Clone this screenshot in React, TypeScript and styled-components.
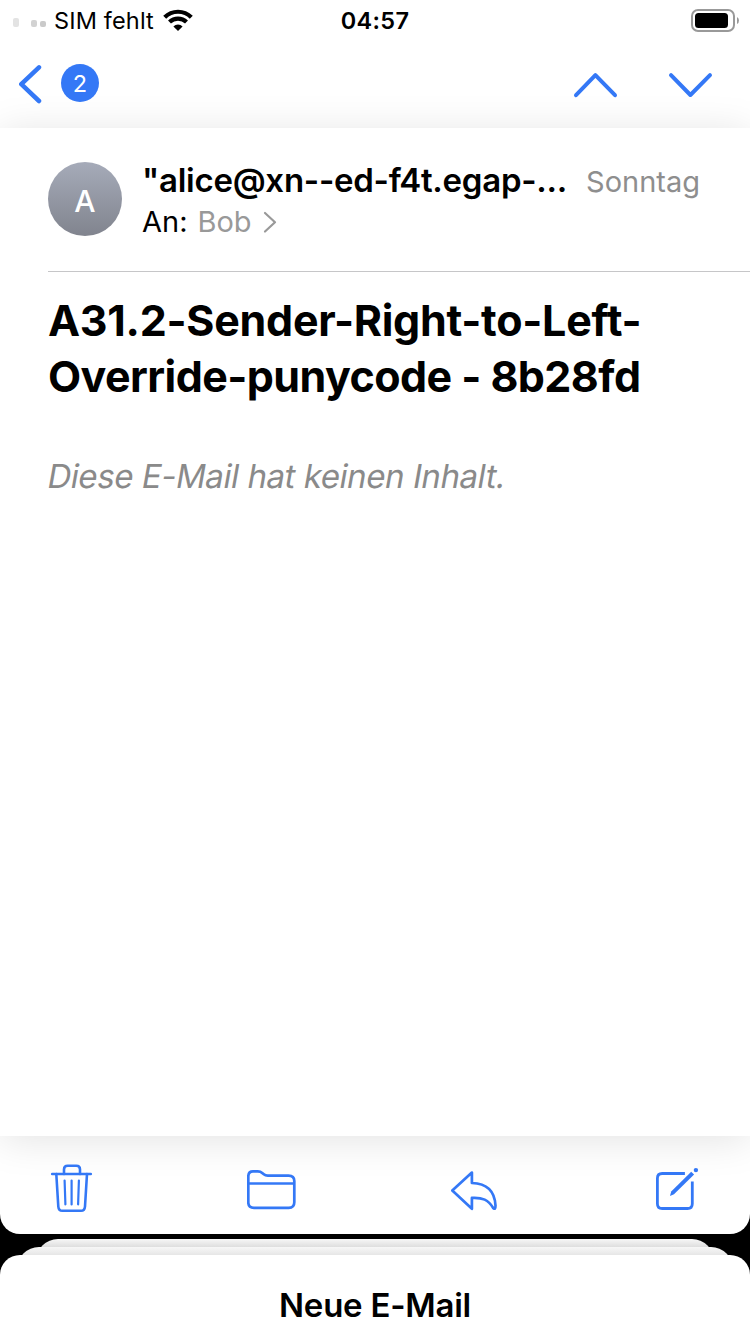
import React from 'react';
import styled, { createGlobalStyle } from 'styled-components';

const BLUE = '#3478f6';

const GlobalStyle = createGlobalStyle`
  * { box-sizing: border-box; }
  body { margin: 0; background: #000; font-family: Inter, "Liberation Sans", sans-serif; color: #000; }
  svg { display: block; flex: none; }
`;

const Screen = styled.div`
  width: 750px;
  height: 1334px;
  overflow: hidden;
  display: flex;
  flex-direction: column;
  background: #000;
`;

const MailCard = styled.main`
  height: 1234px;
  flex: none;
  display: flex;
  flex-direction: column;
  overflow: hidden;
  background: #fff;
  border-radius: 0 0 20px 20px;
`;

const StatusBar = styled.div`
  height: 40px;
  flex: none;
  display: grid;
  grid-template-columns: 1fr auto 1fr;
  align-items: center;
  padding: 0 11px 0 13px;
  z-index: 1;
`;

const Carrier = styled.div`
  display: flex;
  align-items: center;
  font-size: 23.5px;
  line-height: 40px;
  letter-spacing: 0.15px;
  white-space: nowrap;
`;

const CarrierName = styled.span`
  margin: 1px 9px 0 8px;
`;

const Clock = styled.time`
  font-size: 23.5px;
  font-weight: 600;
  line-height: 40px;
  letter-spacing: 0.3px;
  padding: 1px 2px 0 0;
`;

const BatterySlot = styled.div`
  display: flex;
  justify-content: flex-end;
`;

const NavBar = styled.nav`
  height: 88px;
  flex: none;
  display: flex;
  align-items: flex-start;
  padding: 24px 37px 0 17px;
  z-index: 1;
`;

const CountBadge = styled.span`
  width: 38px;
  height: 38px;
  margin-left: 18px;
  border-radius: 50%;
  background: ${BLUE};
  color: #fff;
  font-size: 23.5px;
  line-height: 39px;
  text-align: center;
`;

const NavArrows = styled.div`
  display: flex;
  gap: 49px;
  margin: 7px 0 0 auto;
`;

const Content = styled.section`
  height: 1008px;
  flex: none;
  background: #fff;
  box-shadow: 0 4px 38px rgba(0, 0, 0, 0.115);
  padding-left: 48px;
`;

const MessageHeader = styled.header`
  height: 144px;
  display: flex;
  padding: 34px 50px 0 0;
  border-bottom: 1px solid #c6c6c8;
`;

const Avatar = styled.div`
  width: 74px;
  height: 74px;
  flex: none;
  border-radius: 50%;
  background: linear-gradient(#a6abb9, #81848e);
  color: #fff;
  font-size: 30px;
  font-weight: 500;
  line-height: 78px;
  text-align: center;
`;

const HeaderLines = styled.div`
  flex: 1;
  margin-left: 20px;
`;

const SenderRow = styled.div`
  height: 40px;
  display: flex;
  justify-content: space-between;
  line-height: 36px;
  white-space: nowrap;
`;

const Sender = styled.span`
  font-size: 33px;
  font-weight: 600;
  letter-spacing: -0.26px;
`;

const DateLabel = styled.span`
  font-size: 29px;
  line-height: 40px;
  color: #8e8e8e;
`;

const RecipientRow = styled.div`
  display: flex;
  align-items: center;
  height: 40px;
  font-size: 29px;
  line-height: 40px;
`;

const Recipient = styled.span`
  margin: 0 11px 0 10px;
  color: #999;
`;

const Subject = styled.h1`
  margin: 0;
  padding-top: 20px;
  font-size: 43px;
  font-weight: 700;
  line-height: 56px;
  white-space: nowrap;
`;

const SubjectLine = styled.span<{ $tracking: number }>`
  display: block;
  letter-spacing: ${p => p.$tracking}px;
`;

const EmptyNote = styled.p`
  margin: 50px 0 0;
  font-size: 33px;
  line-height: 44px;
  letter-spacing: -0.43px;
  color: #8a8a8a;
  white-space: nowrap;
  transform: skewX(-10deg);
`;

const Toolbar = styled.footer`
  height: 98px;
  flex: none;
  display: flex;
  justify-content: space-between;
  padding: 26px 50px 0 50px;
`;

const SheetEdge = styled.div<{ $inset: number; $shade: string }>`
  height: 28px;
  flex: none;
  margin: 0 ${p => p.$inset}px -20px;
  border-radius: 22px 22px 0 0;
  background: linear-gradient(#f7f7f7, ${p => p.$shade} 8px);
`;

const SheetStack = styled.div`
  padding-top: 5px;
  display: flex;
  flex-direction: column;
`;

const ComposeSheet = styled.div`
  height: 90px;
  flex: none;
  border-radius: 20px 20px 0 0;
  background: #fff;
  padding-top: 28px;
  font-size: 33px;
  font-weight: 600;
  line-height: 44px;
  letter-spacing: -0.25px;
  text-align: center;
`;

const SignalDots = () => (
  <svg width="33" height="12" viewBox="0 0 33 12">
    <rect x="0" y="3" width="6" height="9" rx="2" fill="#e3e3e3" />
    <rect x="18" y="5" width="6" height="7" rx="2" fill="#d2d2d2" />
    <rect x="27" y="6" width="6" height="6" rx="2" fill="#cacaca" />
  </svg>
);

const WifiIcon = () => (
  <svg width="30" height="24" viewBox="0 0 30 24">
    <g fill="none" stroke="#000" strokeWidth="4.2">
      <path d="M1.7 8.2 A19 19 0 0 1 28.3 8.2" />
      <path d="M6.5 13.1 A12.2 12.2 0 0 1 23.5 13.1" />
    </g>
    <path d="M15 22 L10.4 17.4 A6.5 6.5 0 0 1 19.6 17.4 Z" />
  </svg>
);

const BatteryIcon = () => (
  <svg width="48" height="24" viewBox="0 0 48 24">
    <rect x="1" y="1" width="42" height="21" rx="6" fill="none" stroke="#999" strokeWidth="2" />
    <rect x="4" y="4" width="33" height="15" rx="3.5" />
    <path d="M46 8 Q48 9 48 11.5 Q48 14 46 15 Z" fill="#999" />
  </svg>
);

const BackIcon = () => (
  <svg width="26" height="40" viewBox="0 0 26 40">
    <path d="M22 3.3 L4.3 20.2 L22 37" fill="none" stroke={BLUE} strokeWidth="4.5" strokeLinecap="round" strokeLinejoin="round" />
  </svg>
);

const ArrowIcon = ({ down = false }: { down?: boolean }) => (
  <svg width="46" height="28" viewBox="0 0 46 28">
    <path
      d={down ? 'M4 4.2 L23.4 24 L43 4.2' : 'M4 24.2 L23.4 4.2 L43 24.2'}
      fill="none" stroke={BLUE} strokeWidth="4" strokeLinecap="round" strokeLinejoin="round"
    />
  </svg>
);

const DisclosureIcon = () => (
  <svg width="14" height="24" viewBox="0 0 14 24">
    <path d="M2 3 L12 12.2 L2 21.5" fill="none" stroke="#999" strokeWidth="2.2" strokeLinecap="round" strokeLinejoin="round" />
  </svg>
);

const TrashIcon = () => (
  <svg width="44" height="52" viewBox="50 1162 44 52" fill="none" stroke={BLUE} strokeWidth="2.6" strokeLinecap="round" strokeLinejoin="round">
    <path d="M52.2 1174 H90.8" />
    <path d="M64 1174 V1169.4 Q64 1165.7 67.7 1165.7 H76.3 Q80 1165.7 80 1169.4 V1174" />
    <path d="M56.3 1174 L58.3 1206.5 Q58.6 1210.8 62.3 1210.8 H81 Q84.7 1210.8 85 1206.5 L87 1174" />
    <path d="M64.6 1180.5 L65.4 1204.4 M71.6 1180.5 V1204.4 M78.9 1180.5 L78.1 1204.4" strokeWidth="2.2" />
  </svg>
);

const FolderIcon = () => (
  <svg width="52" height="52" viewBox="247 1162 52 52" fill="none" stroke={BLUE} strokeWidth="2.7" strokeLinejoin="round">
    <path d="M248.3 1202.5 V1176.5 Q248.3 1171.4 253 1171.4 H257.8 Q260.5 1171.4 262.2 1172.9 L263.8 1174.3 Q265.3 1175.6 267.8 1175.6 H288.5 Q294.3 1175.6 294.3 1181 V1202.3 Q294.3 1207.9 288.7 1207.9 H254 Q248.3 1207.9 248.3 1202.5 Z" />
    <path d="M248.3 1183.5 H294.3" />
  </svg>
);

const ReplyIcon = () => (
  <svg width="50" height="52" viewBox="451 1162 50 52" fill="none" stroke={BLUE} strokeWidth="2.7" strokeLinejoin="round">
    <path d="M471.9 1172.5 L452.3 1190.6 L471.9 1208.8 V1197.9 C482.5 1197.3 488.3 1199.8 493.2 1208 Q495.5 1210.2 495.5 1205.5 C494.7 1191 487.5 1183.4 471.9 1183 Z" />
  </svg>
);

const ComposeIcon = () => (
  <svg width="46" height="52" viewBox="654 1162 46 52" fill="none" stroke={BLUE} strokeWidth="2.8">
    <path d="M684.9 1173.5 H662.2 Q657.4 1173.5 657.4 1178.3 V1203.7 Q657.4 1208.5 662.2 1208.5 H687.5 Q692.3 1208.5 692.3 1203.7 V1181.5" />
    <path d="M670 1196 L671.2 1191.5 L691.2 1171.8 L694.1 1174.5 L674 1194.3 Z" fill={BLUE} stroke="none" />
    <circle cx="695.9" cy="1170.1" r="2.2" fill={BLUE} stroke="none" />
  </svg>
);

export default function App() {
  return (
    <Screen>
      <GlobalStyle />
      <MailCard>
        <StatusBar>
          <Carrier>
            <SignalDots />
            <CarrierName>SIM fehlt</CarrierName>
            <WifiIcon />
          </Carrier>
          <Clock>04:57</Clock>
          <BatterySlot><BatteryIcon /></BatterySlot>
        </StatusBar>
        <NavBar>
          <BackIcon />
          <CountBadge>2</CountBadge>
          <NavArrows>
            <ArrowIcon />
            <ArrowIcon down />
          </NavArrows>
        </NavBar>
        <Content>
          <MessageHeader>
            <Avatar>A</Avatar>
            <HeaderLines>
              <SenderRow>
                <Sender>"alice@xn--ed-f4t.egap-...</Sender>
                <DateLabel>Sonntag</DateLabel>
              </SenderRow>
              <RecipientRow>
                An:<Recipient>Bob</Recipient>
                <DisclosureIcon />
              </RecipientRow>
            </HeaderLines>
          </MessageHeader>
          <Subject>
            <SubjectLine $tracking={-0.27}>A31.2-Sender-Right-to-Left-</SubjectLine>
            <SubjectLine $tracking={-0.57}>Override-punycode - 8b28fd</SubjectLine>
          </Subject>
          <EmptyNote>Diese E-Mail hat keinen Inhalt.</EmptyNote>
        </Content>
        <Toolbar>
          <TrashIcon />
          <FolderIcon />
          <ReplyIcon />
          <ComposeIcon />
        </Toolbar>
      </MailCard>
      <SheetStack>
        <SheetEdge $inset={36} $shade="#dedede" />
        <SheetEdge $inset={17} $shade="#e6e6e6" />
        <ComposeSheet>Neue E-Mail</ComposeSheet>
      </SheetStack>
    </Screen>
  );
}
